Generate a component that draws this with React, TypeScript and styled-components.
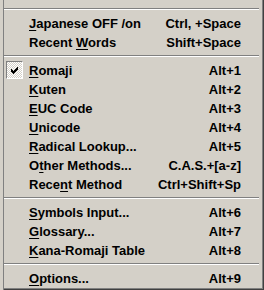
import React from "react";
import styled, { createGlobalStyle } from "styled-components";

const colors = {
  FACE: "#d4d0c8",
  SHADOW: "#808080",
  DARK: "#404040",
  HILITE: "#ffffff",
  TEXT: "#000000",
};

type Entry =
  | { type: "sep" }
  | { type: "item"; label: string; shortcut: string; checked?: boolean };

const entries: Entry[] = [
  { type: "sep" },
  { type: "item", label: "&Japanese OFF /on", shortcut: "Ctrl, +Space" },
  { type: "item", label: "Recent &Words", shortcut: "Shift+Space" },
  { type: "sep" },
  { type: "item", label: "&Romaji", shortcut: "Alt+1", checked: true },
  { type: "item", label: "&Kuten", shortcut: "Alt+2" },
  { type: "item", label: "&EUC Code", shortcut: "Alt+3" },
  { type: "item", label: "&Unicode", shortcut: "Alt+4" },
  { type: "item", label: "&Radical Lookup...", shortcut: "Alt+5" },
  { type: "item", label: "O&ther Methods...", shortcut: "C.A.S.+[a-z]" },
  { type: "item", label: "Rece&nt Method", shortcut: "Ctrl+Shift+Sp" },
  { type: "sep" },
  { type: "item", label: "&Symbols Input...", shortcut: "Alt+6" },
  { type: "item", label: "&Glossary...", shortcut: "Alt+7" },
  { type: "item", label: "&Kana-Romaji Table", shortcut: "Alt+8" },
  { type: "sep" },
  { type: "item", label: "&Options...", shortcut: "Alt+9" },
];

// "&X" marks the mnemonic letter
const Label = ({ text }: { text: string }) => {
  const i = text.indexOf("&");
  if (i < 0) return <>{text}</>;
  return (
    <>
      {text.slice(0, i)}
      <Mnemonic>{text[i + 1]}</Mnemonic>
      {text.slice(i + 2)}
    </>
  );
};

const CheckGlyph = () => {
  const rows = ["......X", ".....XX", "X...XXX", "XX.XXX.", "XXXXX..", ".XXX...", "..X...."];
  return (
    <svg width="7" height="7" viewBox="0 0 7 7" shapeRendering="crispEdges">
      {rows.map((r, y) =>
        r.split("").map((c, x) =>
          c === "X" ? <rect key={`${x}-${y}`} x={x} y={y} width="1" height="1" fill="#000" /> : null
        )
      )}
    </svg>
  );
};

export default function App() {
  return (
    <>
      <GlobalStyle />
      <Frame>
        <Panel>
          {entries.map((e, idx) =>
            e.type === "sep" ? (
              <Separator key={idx} />
            ) : (
              <Row key={idx}>
                <Gutter>{e.checked && <CheckBox><CheckGlyph /></CheckBox>}</Gutter>
                <Text>
                  <Label text={e.label} />
                </Text>
                <Shortcut>{e.shortcut}</Shortcut>
              </Row>
            )
          )}
        </Panel>
      </Frame>
    </>
  );
}

const GlobalStyle = createGlobalStyle`
  html, body {
    margin: 0;
    padding: 0;
    background: ${colors.FACE};
  }
`;

const Frame = styled.div`
  width: 264px;
  height: 290px;
  box-sizing: border-box;
  padding-left: 3px;
  background: ${colors.FACE};
  overflow: hidden;
`;

const Panel = styled.div`
  height: 100%;
  box-sizing: border-box;
  display: flex;
  flex-direction: column;
  padding: 5px 4px 2px 0;
  border-left: 1px solid ${colors.SHADOW};
  box-shadow: inset -1px -1px 0 ${colors.DARK}, inset -2px -2px 0 ${colors.SHADOW};
  font-family: "Liberation Sans", Arial, sans-serif;
  font-weight: bold;
  font-size: 13px;
  color: ${colors.TEXT};
`;

const Separator = styled.div`
  height: 9px;
  flex: none;
  box-sizing: border-box;
  padding-top: 3px;
  margin-right: 1px;

  &::after {
    content: "";
    display: block;
    height: 1px;
    background: ${colors.SHADOW};
    border-bottom: 1px solid ${colors.HILITE};
  }
`;

const Row = styled.div`
  display: flex;
  align-items: center;
  height: 19px;
  flex: none;
  white-space: nowrap;
`;

const Gutter = styled.div`
  width: 25px;
  height: 19px;
  flex: none;
  display: flex;
  align-items: flex-start;
  padding-left: 2px;
  box-sizing: border-box;
`;

const CheckBox = styled.div`
  width: 17px;
  height: 18px;
  box-sizing: border-box;
  display: flex;
  align-items: center;
  justify-content: center;
  border-top: 1px solid ${colors.SHADOW};
  border-left: 1px solid ${colors.SHADOW};
  border-right: 1px solid ${colors.HILITE};
  border-bottom: 1px solid ${colors.HILITE};
  background: repeating-conic-gradient(${colors.HILITE} 0 25%, ${colors.FACE} 0 50%) 0 0 / 2px 2px;
`;

const Text = styled.span`
  flex: 1;
  line-height: 19px;
`;

const Shortcut = styled.span`
  flex: none;
  padding-right: 19px;
  line-height: 19px;
  text-align: right;
`;

const Mnemonic = styled.span`
  text-decoration: underline;
  text-decoration-thickness: 1px;
  text-underline-offset: 2px;
`;
